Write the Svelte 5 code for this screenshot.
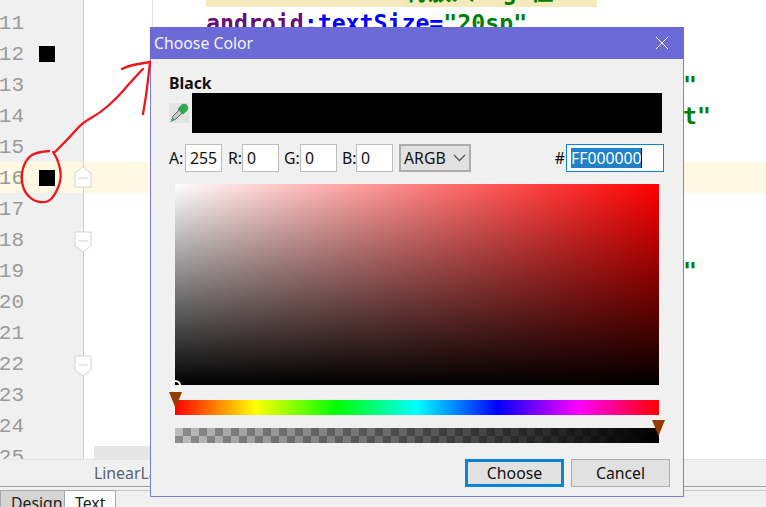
<script>
  // Line numbers shown in the gutter, with the colour swatch and fold markers
  const rows = [
    { n: 10 },
    { n: 11, code: 'attr' },
    { n: 12, swatch: true },
    { n: 13, tail: '"' },
    { n: 14, tail: 't"' },
    { n: 15 },
    { n: 16, swatch: true, fold: 'open', active: true },
    { n: 17 },
    { n: 18, fold: 'close' },
    { n: 19, tail: '"' },
    { n: 20 },
    { n: 21 },
    { n: 22, fold: 'close' },
    { n: 23 },
    { n: 24 },
    { n: 25 }
  ];

  const fields = [
    { label: 'A:', value: '255' },
    { label: 'R:', value: '0' },
    { label: 'G:', value: '0' },
    { label: 'B:', value: '0' }
  ];

  // Hand drawn red marks, smoothed through the midpoints
  const strokes = [
    [[49, 151], [37, 152], [27, 158], [21, 173], [23, 190], [33, 201], [47, 203], [55, 195], [62, 178], [58, 160], [53, 152]],
    [[55, 152], [70, 137], [82, 123], [100, 113], [117, 98], [128, 85], [140, 72], [143, 69]],
    [[122, 69], [127, 66], [150, 62]],
    [[150, 62], [147, 90], [143, 114]]
  ];

  function smooth(pts) {
    let d = `M${pts[0][0]} ${pts[0][1]}`;
    for (let i = 1; i < pts.length - 1; i++) {
      const mx = (pts[i][0] + pts[i + 1][0]) / 2;
      const my = (pts[i][1] + pts[i + 1][1]) / 2;
      d += ` Q${pts[i][0]} ${pts[i][1]} ${mx} ${my}`;
    }
    const last = pts[pts.length - 1];
    return `${d} L${last[0]} ${last[1]}`;
  }
</script>

<div class="ide">
  <div class="editor">
    {#each rows as row}
      <div class="row" class:active={row.active}>
        <div class="gutter">
          <span class="num">{row.n}</span>
          {#if row.swatch}<span class="swatch"></span>{/if}
          {#if row.fold}
            <svg class="fold" class:down={row.fold === 'close'} width="18" height="22" viewBox="0 0 18 22">
              <path d="M1 7 9 1l8 6v14H1z" fill="#fff" stroke="#d4d4d4" />
              <path d="M4 12h10" stroke="#d4d4d4" />
            </svg>
          {/if}
        </div>
        <div class="code">
          {#if row.n === 10}
            <span class="todo">将放入  g 位</span>
          {:else if row.code}
            <span class="key">android</span><span class="attr">:textSize=</span><span class="str">"20sp"</span>
          {:else if row.tail}
            <span class="str tail">{row.tail}</span>
          {/if}
        </div>
      </div>
    {/each}
    <div class="hscroll"></div>
  </div>

  <div class="status">LinearLayout</div>

  <div class="tabs">
    <span class="tab design">Design</span>
    <span class="tab text">Text</span>
    <span class="tab-rest"></span>
  </div>

  <div class="dialog">
    <div class="title">
      <span>Choose Color</span>
      <svg width="14" height="14" viewBox="0 0 14 14"><path d="M1 1l12 12M13 1 1 13" stroke="#fff" /></svg>
    </div>
    <div class="body">
      <div class="name">Black</div>
      <div class="preview-row">
        <span class="dropper">
          <svg width="20" height="20" viewBox="0 0 20 20">
            <path d="M3 17 4 13 10.500 6.500 13.500 9.500 7 16z" fill="#c8c8c8" stroke="#666" />
            <path d="M1.500 19 3.500 14.500 6 17z" fill="#35ad55" />
            <path d="M8.500 6 11 3.500 16.500 9 14 11.500z" fill="#2fa850" />
            <circle cx="15" cy="5" r="4.200" fill="#2fa850" />
          </svg>
        </span>
        <div class="preview"></div>
      </div>

      <div class="values">
        {#each fields as f}
          <label class="field"><span class="lab">{f.label}</span><span class="input">{f.value}</span></label>
        {/each}
        <span class="select">ARGB
          <svg width="13" height="8" viewBox="0 0 13 8"><path d="M1 1l5.500 5.500L12 1" fill="none" stroke="#555" stroke-width="1.300" /></svg>
        </span>
        <span class="hash">#</span>
        <span class="hex"><span class="selected">FF000000</span></span>
      </div>

      <div class="picker">
        <div class="square"><span class="dot"></span></div>
        <div class="bar hue"><span class="thumb first"></span></div>
        <div class="bar alpha"><span class="thumb last"></span></div>
      </div>

      <div class="buttons">
        <button class="primary">Choose</button>
        <button>Cancel</button>
      </div>
    </div>
  </div>

  <svg class="ink" width="766" height="507" viewBox="0 0 766 507">
    {#each strokes as pts}
      <path d={smooth(pts)} />
    {/each}
  </svg>
</div>

<style>
  :global(body) {
    margin: 0;
    overflow: hidden;
  }

  .ide {
    position: relative;
    width: 766px;
    height: 507px;
    overflow: hidden;
    background: #fff;
    font-family: "Noto Sans", "Noto Sans CJK SC", sans-serif;
  }

  .editor {
    position: relative;
    height: 459px;
    overflow: hidden;
    background: linear-gradient(#e2e2e2, #e2e2e2) 152px 0 / 1px 100% no-repeat;
  }

  .row {
    display: flex;
    height: 31px;
    position: relative;
    top: -24px;
  }

  .row.active {
    background: #fff9e3;
  }

  .gutter {
    position: relative;
    flex: 0 0 83px;
    display: flex;
    align-items: center;
    background: #f0f0f0;
    border-right: 1px solid #d0d0d0;
  }

  .active .gutter {
    background: #fff9e3;
  }

  .num {
    width: 24px;
    flex: none;
    display: flex;
    justify-content: flex-end;
    padding-top: 2px;
    font: 21px "Liberation Mono", monospace;
    color: #9a9a9a;
  }

  .swatch {
    width: 16px;
    height: 16px;
    margin-left: 15px;
    background: #000;
  }

  .fold {
    position: absolute;
    left: 74px;
    top: 4px;
  }

  .fold.down {
    top: 7px;
    transform: scaleY(-1);
  }

  .code {
    padding-left: 122px;
    font: bold 23.200px/31px "DejaVu Sans Mono", "Noto Sans CJK SC", monospace;
    white-space: pre;
  }

  .todo {
    display: block;
    width: 391px;
    padding-left: 199px;
    box-sizing: border-box;
    background: #f5eabc;
    color: #008000;
  }

  .key { color: #660e7a; }
  .attr { color: #0000ff; }
  .str { color: #008000; }
  .tail { margin-left: 477px; }

  .hscroll {
    position: absolute;
    left: 94px;
    width: 300px;
    bottom: 0;
    height: 13px;
    background: #e6e6e6;
  }

  .status {
    height: 26px;
    line-height: 26px;
    padding-left: 94px;
    font-size: 15.800px;
    color: #5a6270;
    background: #f0f0f0;
    border-bottom: 1px solid #a0a0a0;
    border-top: 1px solid #e4e4e4;
  }

  .tabs {
    display: flex;
    height: 20px;
    padding-top: 3px;
    background: #f0f0f0;
    font-size: 15.800px;
    color: #222;
    line-height: 24px;
  }

  .tab {
    height: 24px;
    padding: 0 10px;
    box-sizing: border-box;
    border: 1px solid #a8a8a8;
    border-bottom: 0;
  }

  .design { background: #d4d4d4; width: 65px; }
  .text { background: #fff; border-left: 0; width: 51px; }

  .tab-rest {
    flex: 1;
    border-top: 1px solid #c8c8c8;
  }

  .dialog {
    position: absolute;
    left: 150px;
    top: 27px;
    width: 534px;
    height: 470px;
    box-sizing: border-box;
    border: 1px solid #7d7de0;
    border-top: 0;
    background: #f0f0f0;
    color: #111;
    display: flex;
    flex-direction: column;
  }

  .title {
    flex: none;
    height: 32px;
    margin: 0 -1px;
    padding: 0 15px 0 4px;
    display: flex;
    align-items: center;
    justify-content: space-between;
    background: #6c6ad6;
    color: #f4f4ff;
    font-size: 15.800px;
  }

  .body {
    flex: 1;
    padding: 16px 12px 8px 18px;
    font-size: 15.800px;
    display: flex;
    flex-direction: column;
  }

  .name {
    height: 18px;
    line-height: 17px;
    font-weight: 700;
  }

  .preview-row {
    display: flex;
    align-items: center;
    gap: 3px;
    height: 40px;
    padding-right: 9px;
  }

  .dropper {
    display: flex;
    background: #e4e4e4;
  }

  .preview {
    flex: 1;
    height: 40px;
    background: #000;
  }

  .values {
    display: flex;
    align-items: center;
    height: 28px;
    margin-top: 11px;
  }

  .field {
    display: flex;
    align-items: center;
    margin-right: 5px;
  }

  .field:first-child,
  .field:nth-child(4) {
    margin-right: 6px;
  }

  .lab {
    width: 16px;
    white-space: nowrap;
  }

  .field:nth-child(even) .lab {
    width: 14px;
  }

  .input {
    width: 37px;
    height: 28px;
    box-sizing: border-box;
    border: 1px solid #bdbdbd;
    background: #fff;
    padding-left: 4px;
    line-height: 26px;
  }

  .select {
    width: 72px;
    height: 28px;
    box-sizing: border-box;
    border: 2px solid #adadad;
    background: #e1e1e1;
    padding: 0 3px;
    display: flex;
    align-items: center;
    justify-content: space-between;
  }

  .hash {
    margin-left: auto;
  }

  .hex {
    width: 98px;
    height: 28px;
    box-sizing: border-box;
    margin-right: 7px;
    margin-left: 1px;
    border: 1px solid #0a84d8;
    background: #fff;
    padding: 3px 4px;
    display: flex;
  }

  .selected {
    height: 20px;
    line-height: 20px;
    width: 71px;
    background: #2080c8;
    color: #fff;
    border-right: 1px solid #111;
    box-sizing: border-box;
    white-space: nowrap;
    overflow: hidden;
  }

  .picker {
    display: flex;
    flex-direction: column;
    padding-left: 6px;
    padding-right: 12px;
    margin-top: 12px;
  }

  .square {
    position: relative;
    height: 201px;
    background:
      linear-gradient(to bottom, rgba(0, 0, 0, 0), #000),
      linear-gradient(to right, #fff, #f00);
  }

  .dot {
    position: absolute;
    left: -5px;
    bottom: -6px;
    width: 7px;
    height: 7px;
    border: 2px solid #fff;
    border-radius: 50%;
  }

  .bar {
    position: relative;
    height: 15px;
  }

  .hue {
    margin-top: 15px;
    background: linear-gradient(to right, #f00, #ff0, #0f0, #0ff, #00f, #f0f, #f00);
  }

  .alpha {
    margin-top: 13px;
    background:
      linear-gradient(to right, rgba(0, 0, 0, 0), #000),
      repeating-conic-gradient(#8c8c8c 0 25%, #bdbdbd 0 50%) 0 0 / 16px 16px;
  }

  .thumb {
    position: absolute;
    top: -8px;
    width: 13px;
    height: 16px;
    background: #963c00;
    clip-path: polygon(0 0, 100% 0, 50% 100%);
  }

  .thumb.first { left: -6px; }
  .thumb.last { right: -6px; }

  .buttons {
    display: flex;
    justify-content: flex-end;
    gap: 7px;
    margin: 16px 1px 0 0;
  }

  button {
    width: 99px;
    height: 28px;
    box-sizing: border-box;
    padding: 0;
    border: 1px solid #adadad;
    background: #e1e1e1;
    color: #111;
    font: inherit;
  }

  button.primary {
    border: 3px solid #0a84d8;
  }

  .ink {
    position: absolute;
    left: 0;
    top: 0;
    pointer-events: none;
  }

  .ink path {
    fill: none;
    stroke: #f0141c;
    stroke-width: 2.300;
    stroke-linecap: round;
    stroke-linejoin: round;
  }
</style>
